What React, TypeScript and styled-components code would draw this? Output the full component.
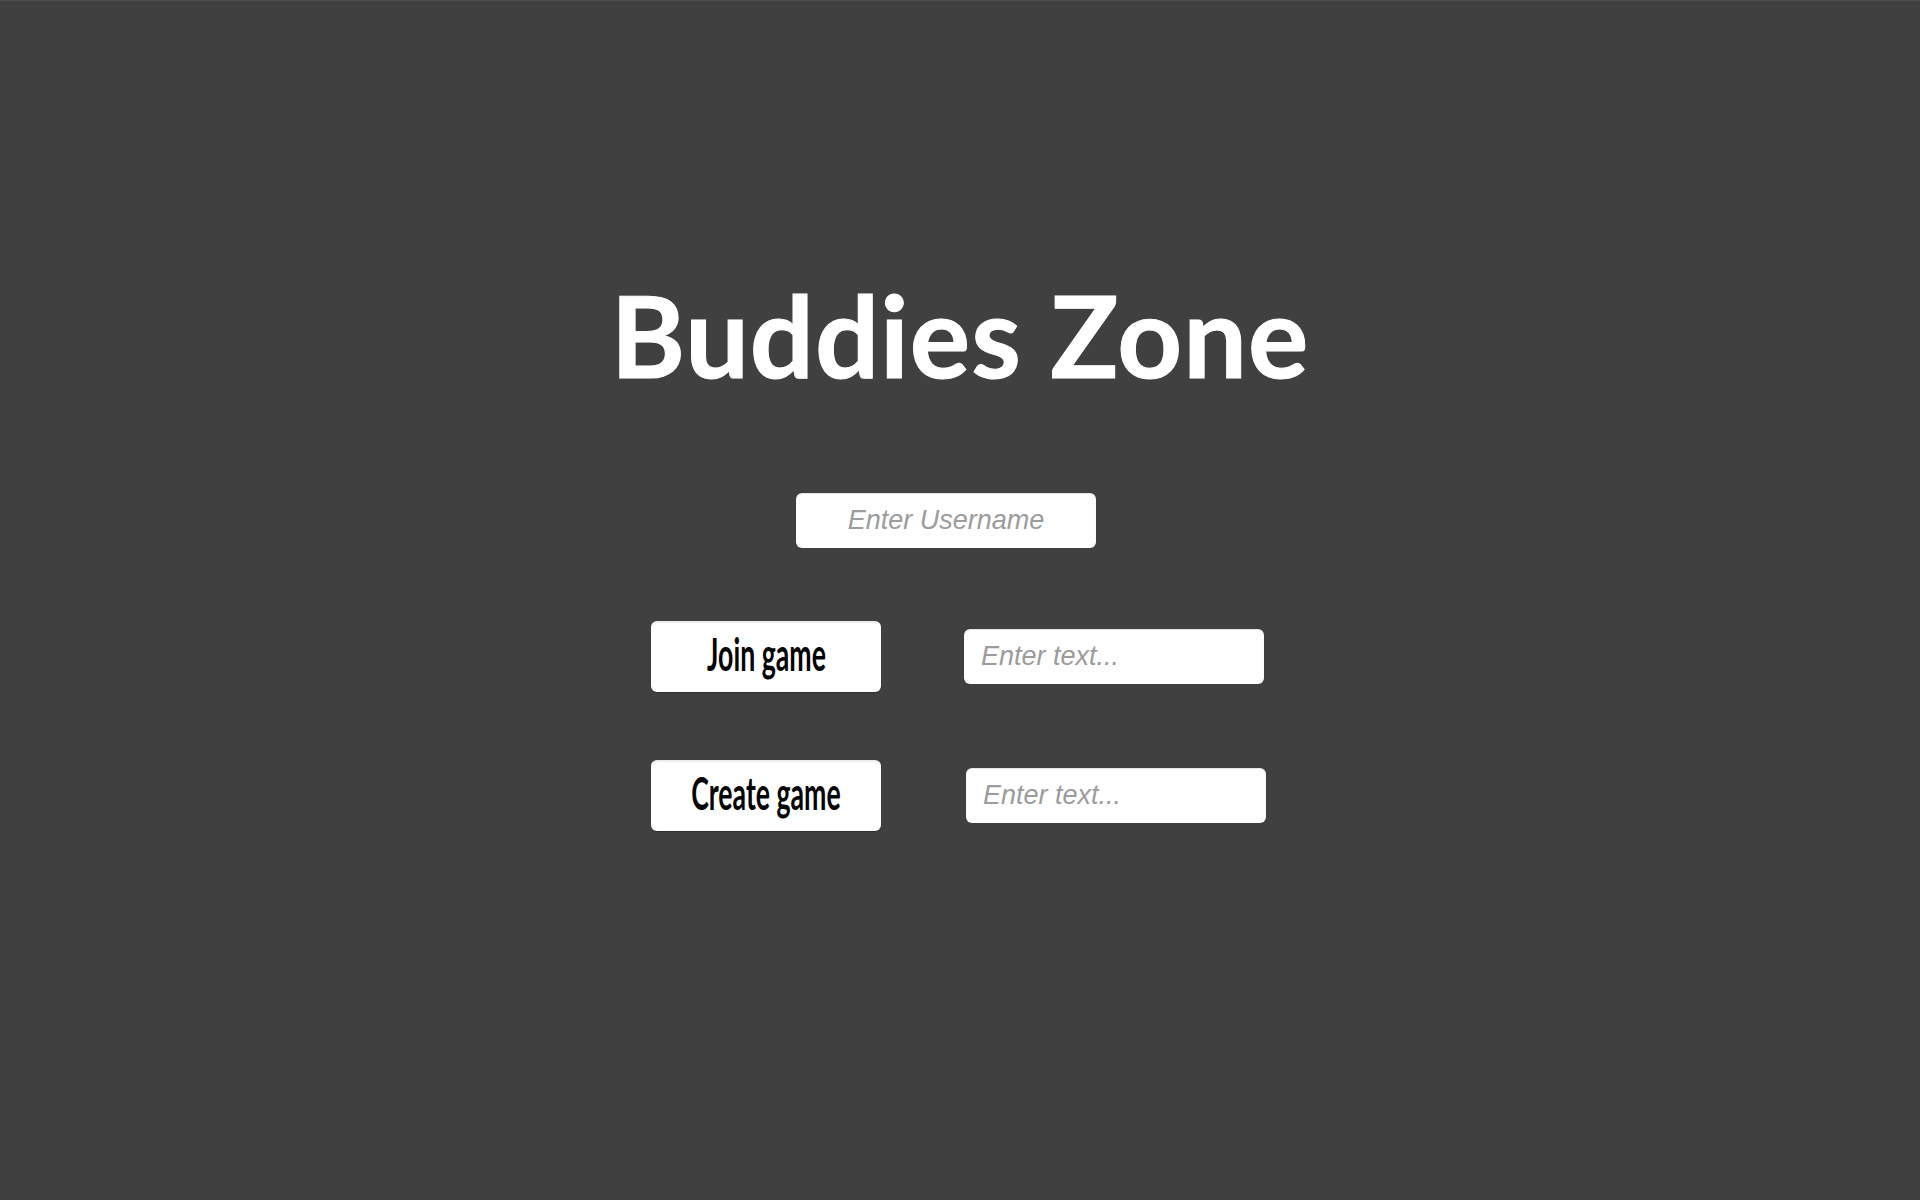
import React from "react";
import styled, { createGlobalStyle } from "styled-components";

const Global = createGlobalStyle`
  html, body {
    margin: 0;
    padding: 0;
    background: #404040;
  }
  body {
    font-family: "Liberation Sans", Arial, sans-serif;
  }
`;

const Page = styled.main`
  width: 1920px;
  height: 1200px;
  background: #404040;
  border-top: 1px solid #4c4c4c;
  box-sizing: border-box;
  display: flex;
  flex-direction: column;
  align-items: center;
  padding-top: 277px;
`;

const Title = styled.h1`
  margin: 0;
  font-family: Lato, "Open Sans", sans-serif;
  font-weight: 700;
  font-size: 113px;
  line-height: 1;
  color: #ffffff;
  letter-spacing: 1px;
  -webkit-text-stroke: 1px #ffffff;
`;

const Field = styled.input<{ $align?: "center" | "left" }>`
  box-sizing: border-box;
  width: 300px;
  height: 55px;
  border: none;
  outline: none;
  border-radius: 6px;
  background: #ffffff;
  box-shadow: inset 0 1px 1px rgba(0, 0, 0, 0.12);
  padding: 0 17px;
  font-family: "Liberation Sans", Arial, sans-serif;
  font-style: italic;
  font-size: 27px;
  color: #333;
  text-align: ${(p) => p.$align ?? "left"};
  &::placeholder {
    color: #9c9c9c;
    font-style: italic;
  }
`;

const UserField = styled(Field)`
  margin-top: 102px;
  margin-left: -28px;
`;

const Actions = styled.div`
  display: flex;
  flex-direction: column;
  gap: 68px;
  margin-top: 73px;
  margin-left: -3px;
`;

const Row = styled.div<{ $shift?: number }>`
  display: grid;
  grid-template-columns: 230px 300px;
  column-gap: ${(p) => 83 + (p.$shift ?? 0)}px;
  align-items: center;
`;

const Action = styled.button`
  box-sizing: border-box;
  width: 230px;
  height: 71px;
  border: none;
  border-radius: 6px;
  background: linear-gradient(#e6e6e6 0px, #ffffff 3px, #ffffff 100%);
  box-shadow: 0 1px 1px rgba(0, 0, 0, 0.25);
  display: flex;
  align-items: center;
  justify-content: center;
  padding: 0;
  cursor: pointer;
`;

const ActionLabel = styled.span`
  display: inline-block;
  font-family: Lato, "Open Sans", sans-serif;
  font-weight: 700;
  font-size: 46px;
  line-height: 1;
  color: #050505;
  transform: scaleX(0.58);
  white-space: nowrap;
  margin-top: -6px;
`;

export default function App() {
  return (
    <>
      <Global />
      <Page>
        <Title>Buddies Zone</Title>
        <UserField $align="center" placeholder="Enter Username" />
        <Actions>
          <Row>
            <Action>
              <ActionLabel>Join game</ActionLabel>
            </Action>
            <Field placeholder="Enter text..." />
          </Row>
          <Row $shift={2}>
            <Action>
              <ActionLabel>Create game</ActionLabel>
            </Action>
            <Field placeholder="Enter text..." />
          </Row>
        </Actions>
      </Page>
    </>
  );
}
